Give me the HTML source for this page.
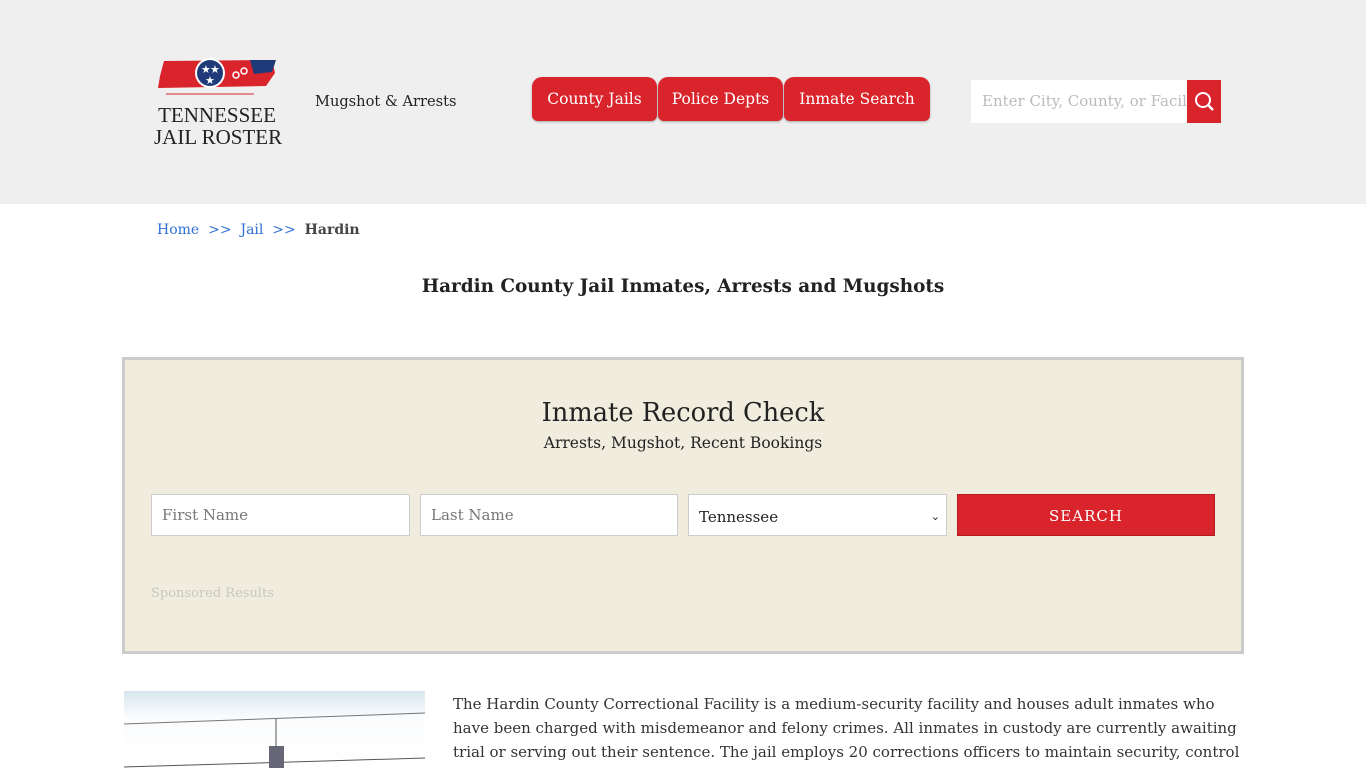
<!DOCTYPE html>
<html><head><meta charset="utf-8"><style>
*{box-sizing:border-box;margin:0;padding:0}
body{width:1366px;height:768px;overflow:hidden;background:#fff;font-family:"DejaVu Serif","Liberation Serif",serif;color:#222}
.hdr{position:absolute;left:0;top:0;width:1366px;height:204px;background:#efefef}
.logo{position:absolute;left:154px;top:58px;width:126px}
.logo .t{font-family:"Liberation Serif",serif;color:#222;text-align:center;font-size:21px;line-height:22px;white-space:nowrap;margin-top:2px}
.mug{position:absolute;left:315px;top:93px;font-size:14.6px;color:#222}
.nav{position:absolute;top:77px;height:44px;background:#d9242c;color:#fff;border-radius:10px 10px 6px 6px;font-size:15.5px;line-height:44px;text-align:center;box-shadow:0 1px 2px rgba(0,0,0,.3)}
.sbox{position:absolute;left:971px;top:80px;width:216px;height:43px;background:#fff;color:#bbb;font-size:15px;line-height:43px;padding-left:11px;white-space:nowrap;overflow:hidden}
.sbtn{position:absolute;left:1187px;top:80px;width:34px;height:43px;background:#d9242c}
.bc{position:absolute;left:157px;top:222px;font-size:14px;color:#2f6fd6}
.bc b{color:#444}
h1{position:absolute;left:0;width:1366px;top:276px;text-align:center;font-size:18.4px;font-weight:bold;color:#222}
.panel{position:absolute;left:122px;top:357px;width:1122px;height:297px;background:#f0eddf;border:3px solid #ccc}
.panel h2{position:absolute;top:38px;width:100%;text-align:center;font-weight:normal;font-size:25.7px;color:#222}
.panel .sub{position:absolute;top:74px;width:100%;text-align:center;font-size:15.5px}
.in{position:absolute;top:134px;height:42px;background:#fff;border:1px solid #ccc;font-size:15px;color:#777;line-height:40px;padding-left:10px}
.srch{position:absolute;left:832px;top:134px;width:258px;height:42px;background:#d9242c;color:#fff;border:1px solid #b01c22;text-align:center;line-height:42px;font-size:15px;letter-spacing:1px}
.spon{position:absolute;left:26px;top:226px;font-size:13px;color:#c8c8c0}
.img{position:absolute;left:124px;top:691px;width:301px;height:77px;background:linear-gradient(#d8e6ef,#fbfcfd 35%,#fff)}
.body{position:absolute;left:453px;top:692px;width:800px;font-size:15px;line-height:24px;color:#333}
</style></head><body>
<div class="hdr">
 <div class="logo">
  <svg width="126" height="40" viewBox="0 0 126 40">
   <path d="M10 3 L118 2 L121 15 L112 28 L4 30 L6 18 Z" fill="#d9242c"/>
   <path d="M96 2 L122 2 L118 14 L100 16 Z" fill="#1e3a78"/>
   <circle cx="56" cy="15" r="15" fill="#fff"/><circle cx="56" cy="15" r="13" fill="#1e3a78"/>
   <text x="47" y="15" fill="#fff" font-size="11">★</text><text x="56" y="15" fill="#fff" font-size="11">★</text><text x="51" y="26" fill="#fff" font-size="11">★</text>
   <circle cx="82" cy="17" r="3" fill="none" stroke="#fff" stroke-width="1.5"/><circle cx="90" cy="13" r="3" fill="none" stroke="#fff" stroke-width="1.5"/>
   <line x1="12" y1="36" x2="100" y2="36" stroke="#d9242c" stroke-width="1"/>
  </svg>
  <div class="t">TENNESSEE<br>JAIL ROSTER</div>
 </div>
 <div class="mug">Mugshot &amp; Arrests</div>
 <div class="nav" style="left:532px;width:125px">County Jails</div>
 <div class="nav" style="left:658px;width:125px">Police Depts</div>
 <div class="nav" style="left:784px;width:146px">Inmate Search</div>
 <div class="sbox">Enter City, County, or Facil</div>
 <div class="sbtn"><svg width="34" height="43"><circle cx="16" cy="20" r="7" fill="none" stroke="#fff" stroke-width="2"/><line x1="21" y1="25" x2="26" y2="30" stroke="#fff" stroke-width="2.5"/></svg></div>
</div>
<div class="bc">Home &nbsp;&gt;&gt;&nbsp; Jail &nbsp;&gt;&gt;&nbsp; <b>Hardin</b></div>
<h1>Hardin County Jail Inmates, Arrests and Mugshots</h1>
<div class="panel">
 <h2>Inmate Record Check</h2>
 <div class="sub">Arrests, Mugshot, Recent Bookings</div>
 <div class="in" style="left:26px;width:259px">First Name</div>
 <div class="in" style="left:295px;width:258px">Last Name</div>
 <div class="in" style="left:563px;width:259px;color:#222;line-height:44px">Tennessee<span style="position:absolute;right:6px;font-size:11px">&#8964;</span></div>
 <div class="srch">SEARCH</div>
 <div class="spon">Sponsored Results</div>
</div>
<div class="img"><svg width="301" height="77"><line x1="0" y1="33" x2="301" y2="22" stroke="#777"/><line x1="0" y1="76" x2="301" y2="67" stroke="#555"/><rect x="145" y="55" width="15" height="22" fill="#667"/><line x1="152" y1="28" x2="152" y2="56" stroke="#555"/></svg></div>
<div class="body">The Hardin County Correctional Facility is a medium-security facility and houses adult inmates who have been charged with misdemeanor and felony crimes. All inmates in custody are currently awaiting trial or serving out their sentence. The jail employs 20 corrections officers to maintain security, control</div>
</body></html>
